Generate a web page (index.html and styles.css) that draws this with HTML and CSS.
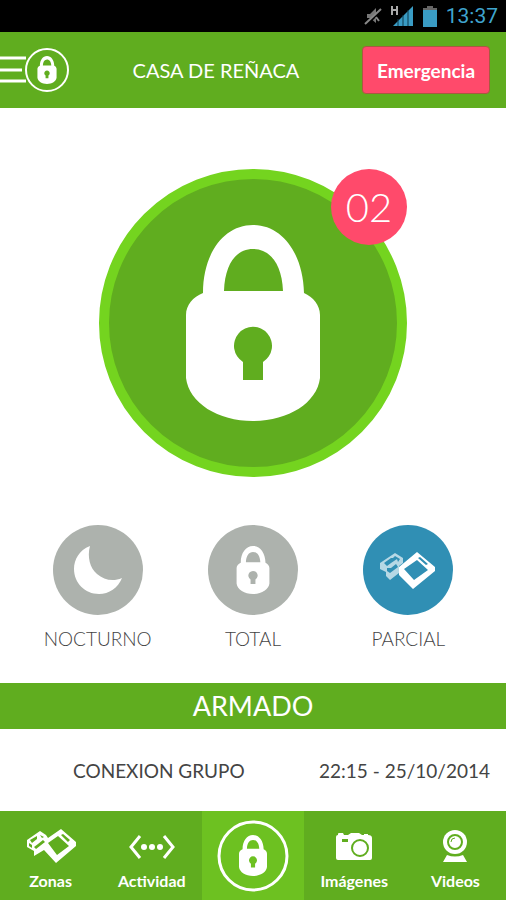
FILE: index.html
```html
<!DOCTYPE html>
<html lang="es">
<head>
    <meta charset="UTF-8">
    <meta name="viewport" content="width=device-width, initial-scale=1.0">
    <title>Casa de Reñaca</title>
    <link rel="stylesheet" href="styles.css">
</head>
<body>
    <!-- Shared icon shapes -->
    <svg class="sprite" aria-hidden="true">
        <symbol id="lock" viewBox="0 0 134 196">
            <path fill-rule="evenodd" d="M17 68C17 28 38 0 67 0S117 28 118 68C127 72 134 80 134 90V153C131 178 102 196 67 196S3 178 0 153V90C0 80 7 72 17 68ZM38 66H97C96 39 84 24 67 24S39 39 38 66ZM57 155H77V137A19 19 0 1 0 57 137Z"/>
        </symbol>
    </svg>

    <div class="statusbar">
        <svg class="status-mute" viewBox="0 0 18 20" aria-label="Silencio">
            <path d="M3 8h3l6-6v15l-6-5H3z" fill="#777"/>
            <path d="M2 19L17 4" stroke="#000" stroke-width="3"/>
            <path d="M1 18L17 3M12 11l3 4" stroke="#888" stroke-width="2"/>
        </svg>
        <svg class="status-signal" viewBox="0 0 23 22" aria-label="Señal">
            <path d="M1 1v9M6 1v9M1 5h5" stroke="#aaa" stroke-width="2" fill="none"/>
            <path d="M22 1v20H2z" fill="#3a9cc4"/>
            <path d="M7 14v7M12 10v11M17 5v16" stroke="#0d3a4d" stroke-width="1"/>
        </svg>
        <svg class="status-battery" viewBox="0 0 14 21" aria-label="Batería">
            <path d="M4 0h6v3H4z" fill="#666"/>
            <path d="M0 2h14v19H0z" fill="#3a9cc4"/>
            <path d="M0 2h14v2H0z" fill="#666"/>
        </svg>
        <span class="clock">13:37</span>
    </div>

    <header class="header">
        <button class="menu-btn" aria-label="Menú">
            <svg viewBox="0 0 70 46">
                <path d="M0 11h26M0 23h22M0 34h26" stroke="#fff" stroke-width="3"/>
                <circle cx="47" cy="23" r="21" fill="none" stroke="#fff" stroke-width="2"/>
                <use href="#lock" x="37" y="9" width="20" height="28"/>
            </svg>
        </button>
        <h1>CASA DE REÑACA</h1>
        <button class="emergency-btn">Emergencia</button>
    </header>

    <main class="main">
        <div class="state">
            <button class="state-btn" aria-label="Armar o desarmar">
                <svg><use href="#lock"/></svg>
            </button>
            <span class="badge">02</span>
        </div>

        <div class="modes">
            <button class="mode">
                <span class="mode-icon">
                    <svg class="icon-moon" viewBox="0 0 48 48">
                        <path d="M16 0C5 4 0 14 0 23C0 37 11 48 25 48C35 48 44 42 48 32C39 36 30 34 23 28C16 22 13 11 16 0Z"/>
                    </svg>
                </span>
                NOCTURNO
            </button>
            <button class="mode">
                <span class="mode-icon">
                    <svg class="icon-lock"><use href="#lock"/></svg>
                </span>
                TOTAL
            </button>
            <button class="mode active">
                <span class="mode-icon">
                    <svg class="icon-boxes" viewBox="0 0 56 38">
                        <path opacity=".65" fill-rule="evenodd" d="M0 12L15 2L23 7V12L19 15V22L10 29L6 25V21L0 18ZM4 12L7 15L11 12L17 8L18 11L20 8L15 5L13 7L11 7ZM7 17V20L10 22L18 16L16 13L11 17Z"/>
                        <path fill-rule="evenodd" d="M19 16L37 1L55 16V20L33 38L19 24ZM24 18L34 29L48 19L37 9ZM40 6L38 7L46 14L48 13Z"/>
                    </svg>
                </span>
                PARCIAL
            </button>
        </div>
    </main>

    <h2 class="banner">ARMADO</h2>
    <div class="event">
        <span>CONEXION GRUPO</span>
        <time datetime="2014-10-25T22:15">22:15 - 25/10/2014</time>
    </div>

    <nav class="tabs">
        <a href="#zonas">
            <svg viewBox="0 0 50 34">
                <path fill-rule="evenodd" d="M1 11L14 2L20 6L22 9L35 0L50 13V17L30 34L18 21L8 27V22L1 18ZM22 14L31 26L43 17L32 7ZM37 5L35 6L42 13L44 11ZM4 11L6 14L11 10L11 7ZM14 6L16 9L18 8ZM3 14V17L6 19V16ZM8 18L10 20L19 13L17 11L12 15Z"/>
            </svg>
            Zonas
        </a>
        <a href="#actividad">
            <svg viewBox="0 0 50 34">
                <path d="M13 7L4 18L13 29M37 7L46 18L37 29" fill="none" stroke="#fff" stroke-width="3"/>
                <circle cx="17" cy="18" r="3"/>
                <circle cx="25" cy="18" r="3"/>
                <circle cx="33" cy="18" r="3"/>
            </svg>
            Actividad
        </a>
        <a href="#alarma" class="current" aria-label="Alarma">
            <svg viewBox="0 0 72 72">
                <circle cx="36" cy="36" r="34" fill="none" stroke="#fff" stroke-width="3"/>
                <use href="#lock" x="22" y="15" width="28" height="41"/>
            </svg>
        </a>
        <a href="#imagenes">
            <svg viewBox="0 0 50 34">
                <path fill-rule="evenodd" d="M9 6V5Q9 4 10 4H14L15 6H19L22 4H30L33 6H35V5H39V6Q43 6 43 9V29Q43 31 41 31H9Q7 31 7 29V8Q7 6 9 6ZM13 10V13H19V10Z"/>
                <circle cx="31" cy="19" r="8" fill="#fff" stroke="#60ad1f" stroke-width="2"/>
            </svg>
            Imágenes
        </a>
        <a href="#videos">
            <svg viewBox="0 0 50 34">
                <circle cx="25" cy="13" r="12"/>
                <circle cx="25" cy="13" r="7" fill="none" stroke="#60ad1f" stroke-width="2"/>
                <path d="M21 13Q21 9 25 9" fill="none" stroke="#60ad1f" stroke-width="1"/>
                <path d="M17 26Q25 29 33 26L37 33H13Z"/>
            </svg>
            Videos
        </a>
    </nav>
</body>
</html>
```
FILE: styles.css
```css
* {
    box-sizing: border-box;
}

body {
    font-family: Lato, "Liberation Sans", sans-serif;
    margin: 0;
    min-height: 100vh;
    display: flex;
    flex-direction: column;
    background-color: #fff;
    color: #444;
}

button {
    font-family: inherit;
    border: none;
    padding: 0;
    background: none;
    cursor: pointer;
}

svg {
    display: block;
    fill: #fff;
}

h1, h2 {
    margin: 0;
    font-weight: normal;
}

.sprite {
    display: none;
}

.statusbar {
    height: 32px;
    padding: 0 8px;
    display: flex;
    align-items: center;
    justify-content: flex-end;
    gap: 9px;
    background-color: #000;
}

.status-mute {
    width: 18px;
    height: 20px;
}

.status-signal {
    width: 23px;
    height: 22px;
}

.status-battery {
    width: 14px;
    height: 21px;
}

.clock {
    font-family: Roboto, sans-serif;
    font-size: 21px;
    color: #3fa5cf;
}

.header {
    height: 76px;
    padding-right: 16px;
    display: flex;
    align-items: center;
    background-color: #60ad1f;
    color: #fff;
}

.menu-btn svg {
    width: 70px;
    height: 46px;
}

.header h1 {
    flex: 1;
    font-size: 20px;
    text-align: center;
}

.emergency-btn {
    width: 128px;
    height: 48px;
    border: 1px solid #a85a40;
    border-radius: 4px;
    background-color: #ff4a6b;
    color: #fff;
    font-size: 19px;
    font-weight: bold;
}

.main {
    flex: 1;
    display: flex;
    flex-direction: column;
    align-items: center;
    padding: 61px 20px 24px;
    gap: 48px;
}

.state {
    position: relative;
}

.state-btn {
    width: 308px;
    height: 308px;
    display: flex;
    align-items: center;
    justify-content: center;
    border: 10px solid #74d41f;
    border-radius: 50%;
    background-color: #60ad1f;
}

.state-btn svg {
    width: 134px;
    height: 196px;
}

.badge {
    position: absolute;
    top: 0;
    right: 0;
    width: 76px;
    height: 76px;
    border-radius: 50%;
    background-color: #ff4a6b;
    color: #fff;
    font-size: 40px;
    font-weight: 300;
    line-height: 76px;
    text-align: center;
}

.modes {
    width: 100%;
    display: grid;
    grid-template-columns: repeat(3, 1fr);
}

.mode {
    display: flex;
    flex-direction: column;
    align-items: center;
    gap: 12px;
    color: #444;
    font-size: 19px;
    font-weight: 300;
    line-height: 24px;
}

.mode-icon {
    width: 90px;
    height: 90px;
    display: flex;
    align-items: center;
    justify-content: center;
    border-radius: 50%;
    background-color: #adb2ad;
}

.mode.active .mode-icon {
    background-color: #308fb4;
}

.icon-moon {
    width: 48px;
    height: 48px;
}

.icon-lock {
    width: 34px;
    height: 48px;
}

.icon-boxes {
    width: 56px;
    height: 38px;
}

.banner {
    background-color: #60ad1f;
    color: #fff;
    font-size: 27px;
    line-height: 46px;
    text-align: center;
}

.event {
    height: 82px;
    padding: 0 16px 0 73px;
    display: flex;
    align-items: center;
    justify-content: space-between;
    font-size: 19px;
}

.tabs {
    height: 89px;
    display: grid;
    grid-template-columns: repeat(5, 1fr);
    background-color: #60ad1f;
}

.tabs a {
    display: flex;
    flex-direction: column;
    align-items: center;
    justify-content: center;
    gap: 8px;
    padding-top: 8px;
    color: #fff;
    font-size: 16px;
    font-weight: bold;
    line-height: 20px;
    text-decoration: none;
}

.tabs svg {
    width: 50px;
    height: 34px;
}

.tabs .current {
    padding-top: 0;
    background-color: #6dc121;
}

.tabs .current svg {
    width: 72px;
    height: 72px;
}
```
